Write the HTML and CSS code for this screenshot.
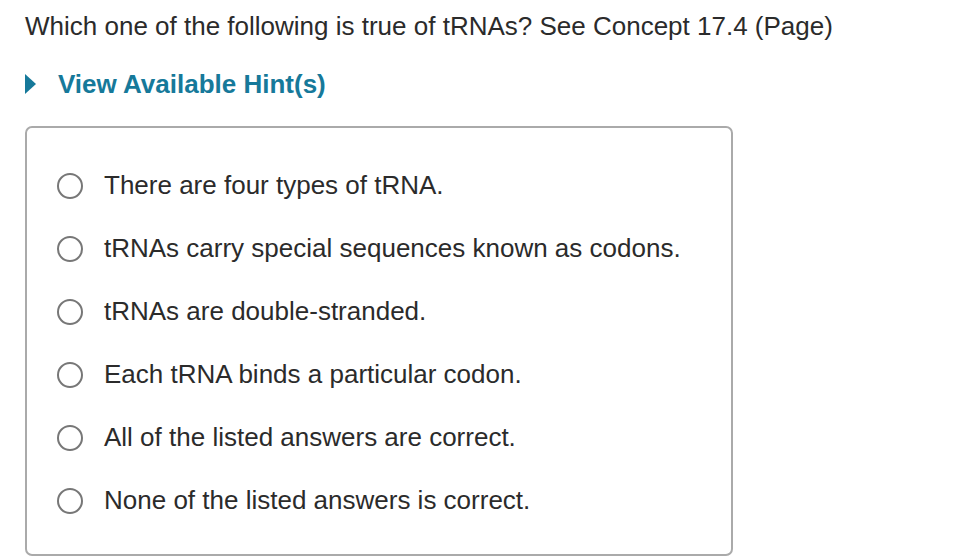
FILE: index.html
```html
<!DOCTYPE html>
<html lang="en">
<head>
    <meta charset="UTF-8">
    <title>Question</title>
    <link rel="stylesheet" href="styles.css">
</head>
<body>
    <p class="question">Which one of the following is true of tRNAs? See Concept 17.4 (Page)</p>

    <div class="hint">
        <span class="hint-arrow"></span>
        <a href="#" class="hint-link">View Available Hint(s)</a>
    </div>

    <div class="answers">
        <label class="choice"><input type="radio" name="answer"> There are four types of tRNA.</label>
        <label class="choice"><input type="radio" name="answer"> tRNAs carry special sequences known as codons.</label>
        <label class="choice"><input type="radio" name="answer"> tRNAs are double-stranded.</label>
        <label class="choice"><input type="radio" name="answer"> Each tRNA binds a particular codon.</label>
        <label class="choice"><input type="radio" name="answer"> All of the listed answers are correct.</label>
        <label class="choice"><input type="radio" name="answer"> None of the listed answers is correct.</label>
    </div>
</body>
</html>
```

FILE: styles.css
```css
body {
    font-family: "Liberation Sans", Arial, sans-serif;
    color: #2b2b2b;
    background-color: #fff;
    margin: 0;
    padding: 0 0 0 25px;
}
.question {
    font-size: 26px;
    margin: 11px 0 0;
    line-height: 30px;
}
.hint {
    display: flex;
    align-items: center;
    margin-top: 28px;
    height: 30px;
}
.hint-arrow {
    width: 0;
    height: 0;
    border-top: 10px solid transparent;
    border-bottom: 10px solid transparent;
    border-left: 11px solid #16799a;
    margin-right: 22px;
}
.hint-link {
    font-size: 26px;
    font-weight: bold;
    color: #16799a;
    text-decoration: none;
}
.answers {
    margin-top: 27px;
    width: 708px;
    height: 430px;
    border: 2px solid #aaa;
    border-radius: 7px;
    padding-top: 26px;
    box-sizing: border-box;
}
.choice {
    display: flex;
    align-items: center;
    height: 63px;
    font-size: 26px;
    padding-left: 30px;
}
.choice input[type="radio"] {
    appearance: none;
    box-sizing: border-box;
    width: 26px;
    height: 26px;
    border: 2px solid #777;
    border-radius: 50%;
    margin: 0 21px 0 0;
    background: #fff;
}
```
